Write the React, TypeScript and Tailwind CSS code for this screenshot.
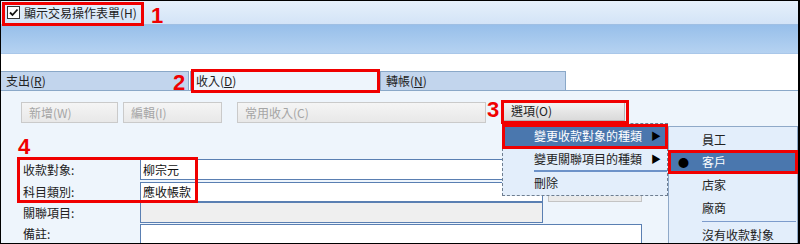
const CJK = "font-['Microsoft_JhengHei','Noto_Sans_CJK_TC',sans-serif]";

function Num({ n, className }: { n: string; className: string }) {
  return (
    <span
      className={`absolute font-['Liberation_Sans',Arial,sans-serif] font-bold text-[22px] leading-none text-[#f00000] ${className}`}
    >
      {n}
    </span>
  );
}

function RedBox({ className }: { className: string }) {
  return <div className={`absolute border-[3px] border-[#f00000] pointer-events-none ${className}`} />;
}

function Tab({ label, hot, active, className }: { label: string; hot: string; active?: boolean; className: string }) {
  return (
    <div
      className={`h-[19px] flex items-center pl-[5px] border border-b-0 border-[#8aa8c8] ${
        active ? 'bg-[#eef5fc]' : 'bg-[#c2d5ed]'
      } ${className}`}
    >
      <span className="text-[12px] text-[#222]">
        {label}(<span className="underline">{hot}</span>)
      </span>
    </div>
  );
}

function DisabledButton({ label, className }: { label: string; className: string }) {
  return (
    <div
      className={`h-[21px] flex items-center pl-[7px] border border-[#cacaca] bg-gradient-to-b from-[#f5f5f5] to-[#e8e8e8] text-[12px] text-[#a5a5a5] ${className}`}
    >
      {label}
    </div>
  );
}

function Field({ value, disabled, className }: { value?: string; disabled?: boolean; className: string }) {
  return (
    <div
      className={`flex items-center pl-[2px] border border-[#5a7fb2] ${
        disabled ? 'bg-[#efefef]' : 'bg-white'
      } text-[12px] text-[#111] ${className}`}
    >
      {value}
    </div>
  );
}

export default function App() {
  return (
    <div
      className={`relative w-[800px] h-[244px] flex flex-col border border-black border-r-2 overflow-hidden bg-white ${CJK} text-[12px]`}
    >
      {/* top toolbar with checkbox */}
      <div className="shrink-0 h-[23px] bg-gradient-to-b from-[#e6f0fb] to-[#d3e4f7] flex items-center pl-[6px]">
        <div className="w-[13px] h-[13px] border border-[#333] bg-white flex items-center justify-center">
          <svg width="11" height="11" viewBox="0 0 11 11">
            <path d="M2 5.5 L4.5 8 L9.5 2.5" stroke="#111" strokeWidth="1.8" fill="none" />
          </svg>
        </div>
        <span className="ml-[4px] text-[12px] text-[#222]">顯示交易操作表單(H)</span>
      </div>
      <div className="shrink-0 h-[1px] bg-[#9fbfe3]" />
      <div className="shrink-0 h-[28px] bg-gradient-to-b from-[#97bfea] to-[#b5d2f1]" />
      <div className="shrink-0 h-[1px] bg-[#a9c7e9]" />
      <div className="shrink-0 h-[17px] bg-white" />

      {/* tabs */}
      <div className="shrink-0 flex h-[19px]">
        <Tab label="支出" hot="R" className="w-[189px] ml-[-1px]" />
        <Tab label="收入" hot="D" active className="w-[189px] ml-[1px]" />
        <Tab label="轉帳" hot="N" className="w-[186px] ml-[1px]" />
        <div className="flex-1" />
      </div>

      {/* panel */}
      <div className="relative flex-1 min-h-0 bg-[#eef5fc] border-t border-[#8aa8c8] pl-[20px]">
        <div className="mt-[11px] flex">
          <DisabledButton label="新增(W)" className="w-[97px]" />
          <DisabledButton label="編輯(I)" className="w-[99px] ml-[5px]" />
          <DisabledButton label="常用收入(C)" className="w-[249px] ml-[15px]" />
          <div className="ml-[17px] mt-[-1px] w-[122px] h-[20px] flex items-center pl-[7px] border border-[#b5b5b5] bg-gradient-to-b from-[#f4f4f4] to-[#dadada] text-[12px] text-[#222]">
            選項(O)
          </div>
        </div>

        {/* form */}
        <div className="mt-[36px] ml-[2px] grid grid-cols-[117px_auto] text-[12px] text-[#222]">
          <div className="h-[21px] flex items-center">收款對象:</div>
          <Field value="柳宗元" className="h-[21px] w-[403px]" />
          <div className="h-[20px] mt-[2px] flex items-center">科目類別:</div>
          <div className="flex mt-[2px]">
            <Field value="應收帳款" className="h-[20px] w-[403px]" />
            <div className="ml-[5px] w-[94px] h-[20px] border border-[#c4c4c4] bg-[#eaeaea]" />
          </div>
          <div className="h-[21px] flex items-center">關聯項目:</div>
          <Field disabled className="h-[21px] w-[403px]" />
          <div className="h-[20px] mt-[1px] flex items-center">備註:</div>
          <Field className="h-[24px] mt-[1px] w-[502px]" />
        </div>

        {/* options menu */}
        <div className="absolute left-[501px] top-[32px] w-[166px] h-[73px] border border-dashed border-[#6e7e90] bg-[#e3eefb] text-[12px]">
          <div className="h-[23px] bg-[#4a77ae] text-white flex items-center pl-[31px]">
            <span className="flex-1">變更收款對象的種類</span>
            <span className="mr-[6px] text-[10px] text-black">▶</span>
          </div>
          <div className="h-[23px] text-[#222] flex items-center pl-[31px]">
            <span className="flex-1">變更關聯項目的種類</span>
            <span className="mr-[6px] text-[10px] text-black">▶</span>
          </div>
          <div className="ml-[31px] h-[2px] bg-[#6d92c8]" />
          <div className="h-[22px] text-[#222] flex items-center pl-[31px]">刪除</div>
        </div>

        {/* submenu */}
        <div className="absolute left-[667px] top-[35px] w-[130px] h-[130px] border border-[#8fa9c8] bg-[#e3eefb] text-[12px] text-[#222] pt-[2px]">
          <div className="h-[22px] flex items-center pl-[33px]">員工</div>
          <div className="h-[22px] bg-[#4a77ae] text-white flex items-center">
            <span className="w-[33px] pl-[9px] text-[11px] text-black">●</span>
            客戶
          </div>
          <div className="h-[23px] flex items-center pl-[33px]">店家</div>
          <div className="h-[23px] flex items-center pl-[33px]">廠商</div>
          <div className="ml-[33px] mr-[1px] h-[1px] bg-[#7d9ccc] mt-[2px]" />
          <div className="h-[26px] flex items-center pl-[33px]">沒有收款對象</div>
        </div>
      </div>

      {/* annotations */}
      <RedBox className="left-[1px] top-[1px] w-[142px] h-[24px]" />
      <Num n="1" className="left-[150px] top-[4px]" />
      <Num n="2" className="left-[172px] top-[71px]" />
      <RedBox className="left-[190px] top-[68px] w-[189px] h-[24px]" />
      <Num n="3" className="left-[486px] top-[98px]" />
      <RedBox className="left-[500px] top-[99px] w-[128px] h-[24px]" />
      <RedBox className="left-[501px] top-[123px] w-[166px] h-[25px]" />
      <RedBox className="left-[667px] top-[149px] w-[130px] h-[24px]" />
      <Num n="4" className="left-[17px] top-[135px]" />
      <RedBox className="left-[16px] top-[156px] w-[181px] h-[46px]" />
    </div>
  );
}
